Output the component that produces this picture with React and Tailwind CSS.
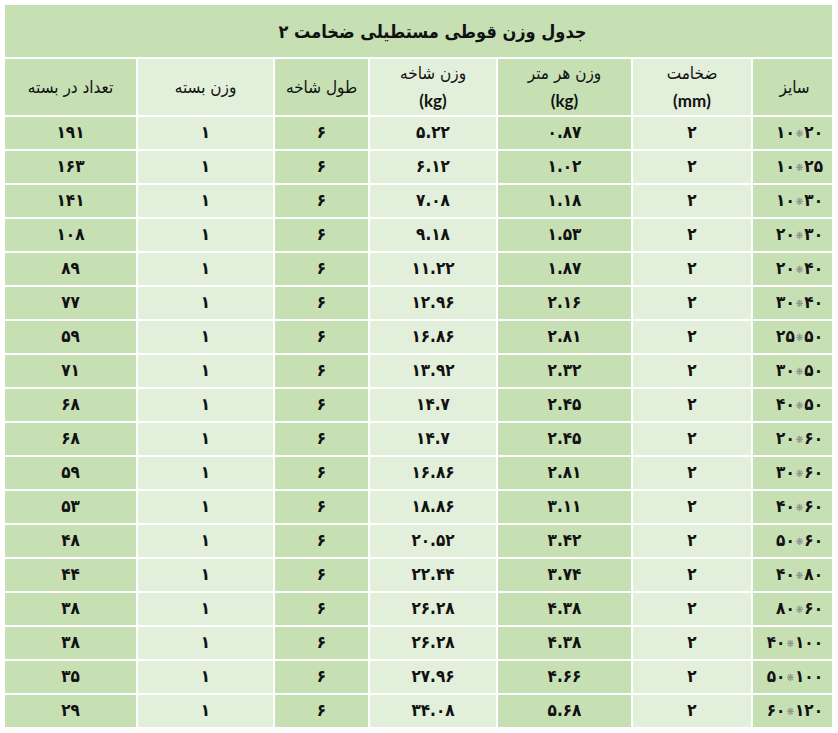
import React from 'react';

const ROWS = [
  ['۱۰', '۲۰', '۲', '۰.۸۷', '۵.۲۲', '۶', '۱', '۱۹۱'],
  ['۱۰', '۲۵', '۲', '۱.۰۲', '۶.۱۲', '۶', '۱', '۱۶۳'],
  ['۱۰', '۳۰', '۲', '۱.۱۸', '۷.۰۸', '۶', '۱', '۱۴۱'],
  ['۲۰', '۳۰', '۲', '۱.۵۳', '۹.۱۸', '۶', '۱', '۱۰۸'],
  ['۲۰', '۴۰', '۲', '۱.۸۷', '۱۱.۲۲', '۶', '۱', '۸۹'],
  ['۳۰', '۴۰', '۲', '۲.۱۶', '۱۲.۹۶', '۶', '۱', '۷۷'],
  ['۲۵', '۵۰', '۲', '۲.۸۱', '۱۶.۸۶', '۶', '۱', '۵۹'],
  ['۳۰', '۵۰', '۲', '۲.۳۲', '۱۳.۹۲', '۶', '۱', '۷۱'],
  ['۴۰', '۵۰', '۲', '۲.۴۵', '۱۴.۷', '۶', '۱', '۶۸'],
  ['۲۰', '۶۰', '۲', '۲.۴۵', '۱۴.۷', '۶', '۱', '۶۸'],
  ['۳۰', '۶۰', '۲', '۲.۸۱', '۱۶.۸۶', '۶', '۱', '۵۹'],
  ['۴۰', '۶۰', '۲', '۳.۱۱', '۱۸.۸۶', '۶', '۱', '۵۳'],
  ['۵۰', '۶۰', '۲', '۳.۴۲', '۲۰.۵۲', '۶', '۱', '۴۸'],
  ['۴۰', '۸۰', '۲', '۳.۷۴', '۲۲.۴۴', '۶', '۱', '۴۴'],
  ['۸۰', '۶۰', '۲', '۴.۳۸', '۲۶.۲۸', '۶', '۱', '۳۸'],
  ['۴۰', '۱۰۰', '۲', '۴.۳۸', '۲۶.۲۸', '۶', '۱', '۳۸'],
  ['۵۰', '۱۰۰', '۲', '۴.۶۶', '۲۷.۹۶', '۶', '۱', '۳۵'],
  ['۶۰', '۱۲۰', '۲', '۵.۶۸', '۳۴.۰۸', '۶', '۱', '۲۹'],
];

const DARK = 'bg-[#c6e0b4]';
const LIGHT = 'bg-[#e2efda]';

// columns from right to left
const COLS = [
  { w: 'w-[81px]', bg: DARK },
  { w: 'w-[120px]', bg: LIGHT },
  { w: 'w-[135px]', bg: DARK },
  { w: 'w-[128px]', bg: LIGHT },
  { w: 'w-[95px]', bg: DARK },
  { w: 'w-[137px]', bg: LIGHT },
  { w: 'w-[133px]', bg: DARK },
];

const cellBase = 'border-2 border-white text-center align-middle p-0';
const unit = "font-['Lato','Open_Sans',sans-serif] font-bold text-[17px]";

export default function App() {
  return (
    <div className="min-h-screen bg-white pt-[3px] pl-[3px] font-['DejaVu_Sans_Condensed','DejaVu_Sans',sans-serif] text-[#111]">
      <table dir="rtl" className="table-fixed border-collapse w-[830px]">
        <colgroup>
          {COLS.map((c, i) => <col key={i} className={c.w} />)}
        </colgroup>
        <thead>
          <tr>
            <th colSpan={7} className={`${cellBase} ${DARK} h-[54px] pl-[28px] text-[18px] font-bold`}>
              جدول وزن قوطی مستطیلی ضخامت ۲
            </th>
          </tr>
          <tr className="text-[17px] font-normal leading-[27px]">
            <th className={`${cellBase} ${COLS[0].bg} h-[58px] font-normal pl-1`}>سایز</th>
            <th className={`${cellBase} ${COLS[1].bg} font-normal`}>ضخامت<br /><span className={unit}>(mm)</span></th>
            <th className={`${cellBase} ${COLS[2].bg} font-normal`}>وزن هر متر<br /><span className={unit}>(kg)</span></th>
            <th className={`${cellBase} ${COLS[3].bg} font-normal`}>وزن شاخه<br /><span className={unit}>(kg)</span></th>
            <th className={`${cellBase} ${COLS[4].bg} font-normal`}>طول شاخه</th>
            <th className={`${cellBase} ${COLS[5].bg} font-normal`}>وزن بسته</th>
            <th className={`${cellBase} ${COLS[6].bg} font-normal`}>تعداد در بسته</th>
          </tr>
        </thead>
        <tbody className="text-[17px] font-bold">
          {ROWS.map((r, i) => (
            <tr key={i}>
              <td className={`${cellBase} ${COLS[0].bg} h-[34px] text-right pr-[9px]`}>
                <span dir="ltr" className="inline-flex items-center">
                  {r[0]}
                  <span className="mx-[1px] text-[10px] font-normal text-[#888]">❋</span>
                  {r[1]}
                </span>
              </td>
              {r.slice(2).map((v, j) => (
                <td key={j} className={`${cellBase} ${COLS[j + 1].bg}`}>
                  <span dir="ltr">{v}</span>
                </td>
              ))}
            </tr>
          ))}
        </tbody>
      </table>
    </div>
  );
}
